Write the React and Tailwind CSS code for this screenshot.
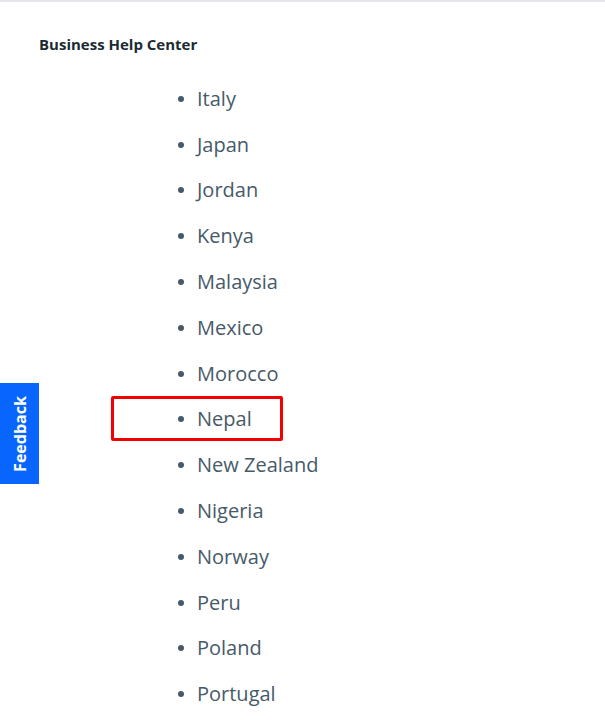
import React from 'react';

const countries = [
  'Italy',
  'Japan',
  'Jordan',
  'Kenya',
  'Malaysia',
  'Mexico',
  'Morocco',
  'Nepal',
  'New Zealand',
  'Nigeria',
  'Norway',
  'Peru',
  'Poland',
  'Portugal',
];

export default function App() {
  return (
    <div className="relative min-h-[720px] w-[605px] overflow-hidden bg-white border-t-2 border-[#e4e6eb] font-['Open_Sans',sans-serif]">
      {/* Header */}
      <div className="h-[74px] pl-[39px] pt-[33px]">
        <h1 className="text-[15px] leading-[18px] font-bold text-[#1c2b33]">Business Help Center</h1>
      </div>

      {/* Country list */}
      <ul className="pl-[178px]">
        {countries.map((name) => (
          <li key={name} className="relative flex h-[45.8px] items-center text-[20px] text-[#465a69]">
            <span className="mr-[13px] h-[6px] w-[6px] rounded-full bg-[#465a69]" />
            <span>{name}</span>
            {name === 'Nepal' && (
              <span className="pointer-events-none absolute left-[-67px] top-[-1px] h-[45px] w-[172px] rounded-[2px] border-[3px] border-[#f30000]" />
            )}
          </li>
        ))}
      </ul>

      {/* Feedback tab */}
      <button className="absolute left-0 top-[381px] flex h-[101px] w-[39px] items-center justify-center bg-[#0866ff]">
        <span className="-rotate-90 whitespace-nowrap text-[16px] font-bold text-white">Feedback</span>
      </button>
    </div>
  );
}
